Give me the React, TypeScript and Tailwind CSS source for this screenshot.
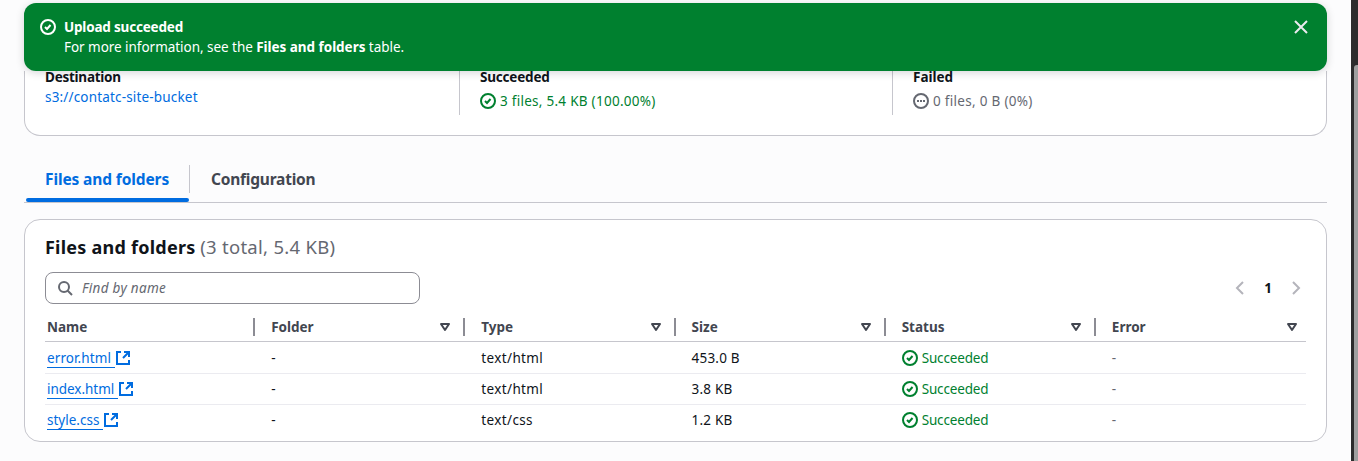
import React from "react";

type IconProps = { className?: string };

const CheckCircle = ({ className = "" }: IconProps) => (
  <svg viewBox="0 0 16 16" className={`h-4 w-4 shrink-0 ${className}`} fill="none" stroke="currentColor" strokeWidth="2">
    <circle cx="8" cy="8" r="7" />
    <path d="m5 8 2 2 3.521-4" />
  </svg>
);

const PendingCircle = ({ className = "" }: IconProps) => (
  <svg viewBox="0 0 16 16" className={`h-4 w-4 shrink-0 ${className}`} fill="none" stroke="currentColor" strokeWidth="2">
    <circle cx="8" cy="8" r="7" />
    <path d="M4 8h2M7 8h2M10 8h2" />
  </svg>
);

const CloseIcon = () => (
  <svg viewBox="0 0 16 16" className="h-4 w-4" fill="none" stroke="currentColor" strokeWidth="2">
    <path d="m2 2 12 12M14 2 2 14" />
  </svg>
);

const SearchIcon = () => (
  <svg viewBox="0 0 16 16" className="h-4 w-4 shrink-0" fill="none" stroke="currentColor" strokeWidth="2">
    <circle cx="7" cy="7" r="5" />
    <path d="m15 15-4.5-4.5" />
  </svg>
);

const ExternalIcon = () => (
  <svg viewBox="0 0 16 16" className="h-4 w-4 shrink-0" fill="none" stroke="currentColor" strokeWidth="2">
    <path d="M9 2h5v5M8 8l6-6" />
    <path d="M14 10v4H2V2h4" />
  </svg>
);

const FilterIcon = () => (
  <svg viewBox="0 0 16 16" className="h-4 w-4 shrink-0" fill="none" stroke="currentColor" strokeWidth="2" strokeLinejoin="round">
    <path d="M4 5h8l-4 6-4-6z" />
  </svg>
);

const Chevron = ({ className = "" }: IconProps) => (
  <svg viewBox="0 0 16 16" className={`h-4 w-4 ${className}`} fill="none" stroke="currentColor" strokeWidth="2">
    <path d="m11 2-6 6 6 6" />
  </svg>
);

const columns = ["Name", "Folder", "Type", "Size", "Status", "Error"];
const files = [
  { name: "error.html", tracking: "tracking-[0.1px]", type: "text/html", size: "453.0 B" },
  { name: "index.html", tracking: "tracking-[-0.03px]", type: "text/html", size: "3.8 KB" },
  { name: "style.css", tracking: "tracking-normal", type: "text/css", size: "1.2 KB" },
];

export default function App() {
  return (
    <div className="flex h-[461px] w-[1358px] overflow-hidden bg-[#fcfcfd] font-['Noto_Sans',sans-serif] text-[13.5px] leading-5 whitespace-nowrap text-[#0f141a]">
      <main className="w-[1351px] pt-[3px] pr-6 pl-6">
        <section className="relative z-10 flex h-[68px] rounded-xl bg-[#00802f] pt-[14px] pl-4 text-white shadow-[0_2px_8px_rgba(0,7,22,0.16)]">
          <CheckCircle className="mt-[2px]" />
          <div className="ml-2 grow">
            <div className="font-bold tracking-[-0.19px]">Upload succeeded</div>
            <div className="tracking-[-0.04px]">
              For more information, see the <b>Files and folders</b> table.
            </div>
          </div>
          <button className="mt-[2px] mr-[18px] h-4 w-4 text-[#ebebf0]" aria-label="Dismiss">
            <CloseIcon />
          </button>
        </section>

        <section className="flex h-[65px] rounded-b-2xl border border-t-0 border-[#c6c6cd] bg-white pl-5">
          <div className="h-[44px] w-[415px] border-r border-[#c6c6cd]">
            <div className="-mt-1 font-bold tracking-[-0.25px]">Destination</div>
            <a className="block tracking-[0.17px] text-[#006ce0]">s3://contatc-site-bucket</a>
          </div>
          <div className="h-[44px] w-[433px] border-r border-[#c6c6cd] pl-5">
            <div className="-mt-1 font-bold tracking-[-0.2px]">Succeeded</div>
            <div className="mt-1 flex items-center gap-1 tracking-[0.27px] text-[#00802f]">
              <CheckCircle />
              3 files, 5.4 KB (100.00%)
            </div>
          </div>
          <div className="h-[44px] pl-5">
            <div className="-mt-1 font-bold">Failed</div>
            <div className="mt-1 flex items-center gap-1 tracking-[0.3px] text-[#656871]">
              <PendingCircle />
              0 files, 0 B (0%)
            </div>
          </div>
        </section>

        <nav className="mt-[29px] flex h-[38px] border-b border-[#c6c6cd] pl-[2px] text-[15.5px] font-bold tracking-[-0.12px]">
          <div className="flex w-[163px] flex-col justify-between text-[#006ce0]">
            <div className="flex h-7 items-center pl-[19px]">Files and folders</div>
            <div className="h-1 rounded-[2px] bg-[#006ce0]" />
          </div>
          <div className="flex h-7 items-center border-l border-[#c6c6cd] pl-[21px] tracking-[-0.22px] text-[#424650]">Configuration</div>
        </nav>

        <section className="mt-4 h-[223px] rounded-2xl border border-[#c6c6cd] bg-white pr-5 pl-5">
          <h2 className="pt-[15px] text-[18px] leading-6">
            <span className="font-bold tracking-[0.24px]">Files and folders</span>{" "}
            <span className="text-[18.5px] tracking-[0.28px] text-[#656871]">(3 total, 5.4 KB)</span>
          </h2>
          <div className="mt-[13px] flex h-8 items-center justify-between">
            <div className="flex h-8 w-[375px] items-center rounded-lg border border-[#8c8c94] pl-[11px] text-[#656871]">
              <SearchIcon />
              <span className="ml-[9px] tracking-[0.3px] italic">Find by name</span>
            </div>
            <div className="mr-[2px] flex items-center text-[#b4b4bb]">
              <Chevron />
              <span className="w-10 text-center font-bold text-[#0f141a]">1</span>
              <Chevron className="rotate-180" />
            </div>
          </div>

          <div className="mt-[7px] grid h-[31px] grid-cols-6 border-b border-[#c6c6cd] font-bold text-[#424650]">
            {columns.map((label, i) => (
              <div key={label} className={`flex items-center justify-between ${i === 0 ? "pl-[2px]" : "pl-4"} ${i === 5 ? "pr-[6px]" : ""}`}>
                <span className="pt-px">{label}</span>
                <div className="flex items-center gap-[10px] pt-px">
                  {i > 0 && <FilterIcon />}
                  {i < 5 && <div className="h-[18px] w-[2px] bg-[#8c8c94]" />}
                </div>
              </div>
            ))}
          </div>
          {files.map((file, i) => (
            <div key={file.name} className={`grid grid-cols-6 items-center ${i < 2 ? "h-[31px] border-b border-[#ebebf0]" : "h-[30px]"} ${i === 0 ? "mt-[1px]" : ""}`}>
              <div className="flex items-center pl-[2px] text-[#006ce0]">
                <span className={`border-b border-[#006ce0] pr-1 leading-[18px] ${file.tracking}`}>{file.name}</span>
                <ExternalIcon />
              </div>
              <div className="pl-4">-</div>
              <div className="pl-4 tracking-[0.36px]">{file.type}</div>
              <div className="pl-4 tracking-[0.22px]">{file.size}</div>
              <div className="flex items-center gap-1 pl-4 tracking-[-0.15px] text-[#00802f]">
                <CheckCircle />
                Succeeded
              </div>
              <div className="pl-4 text-[#656871]">-</div>
            </div>
          ))}
        </section>
      </main>
      <div className="w-[7px] bg-[#2c2c2c] pt-[65px] pl-[3px]">
        <div className="h-[396px] w-1 rounded-tl-[3px] bg-[#9f9f9f]" />
      </div>
    </div>
  );
}
